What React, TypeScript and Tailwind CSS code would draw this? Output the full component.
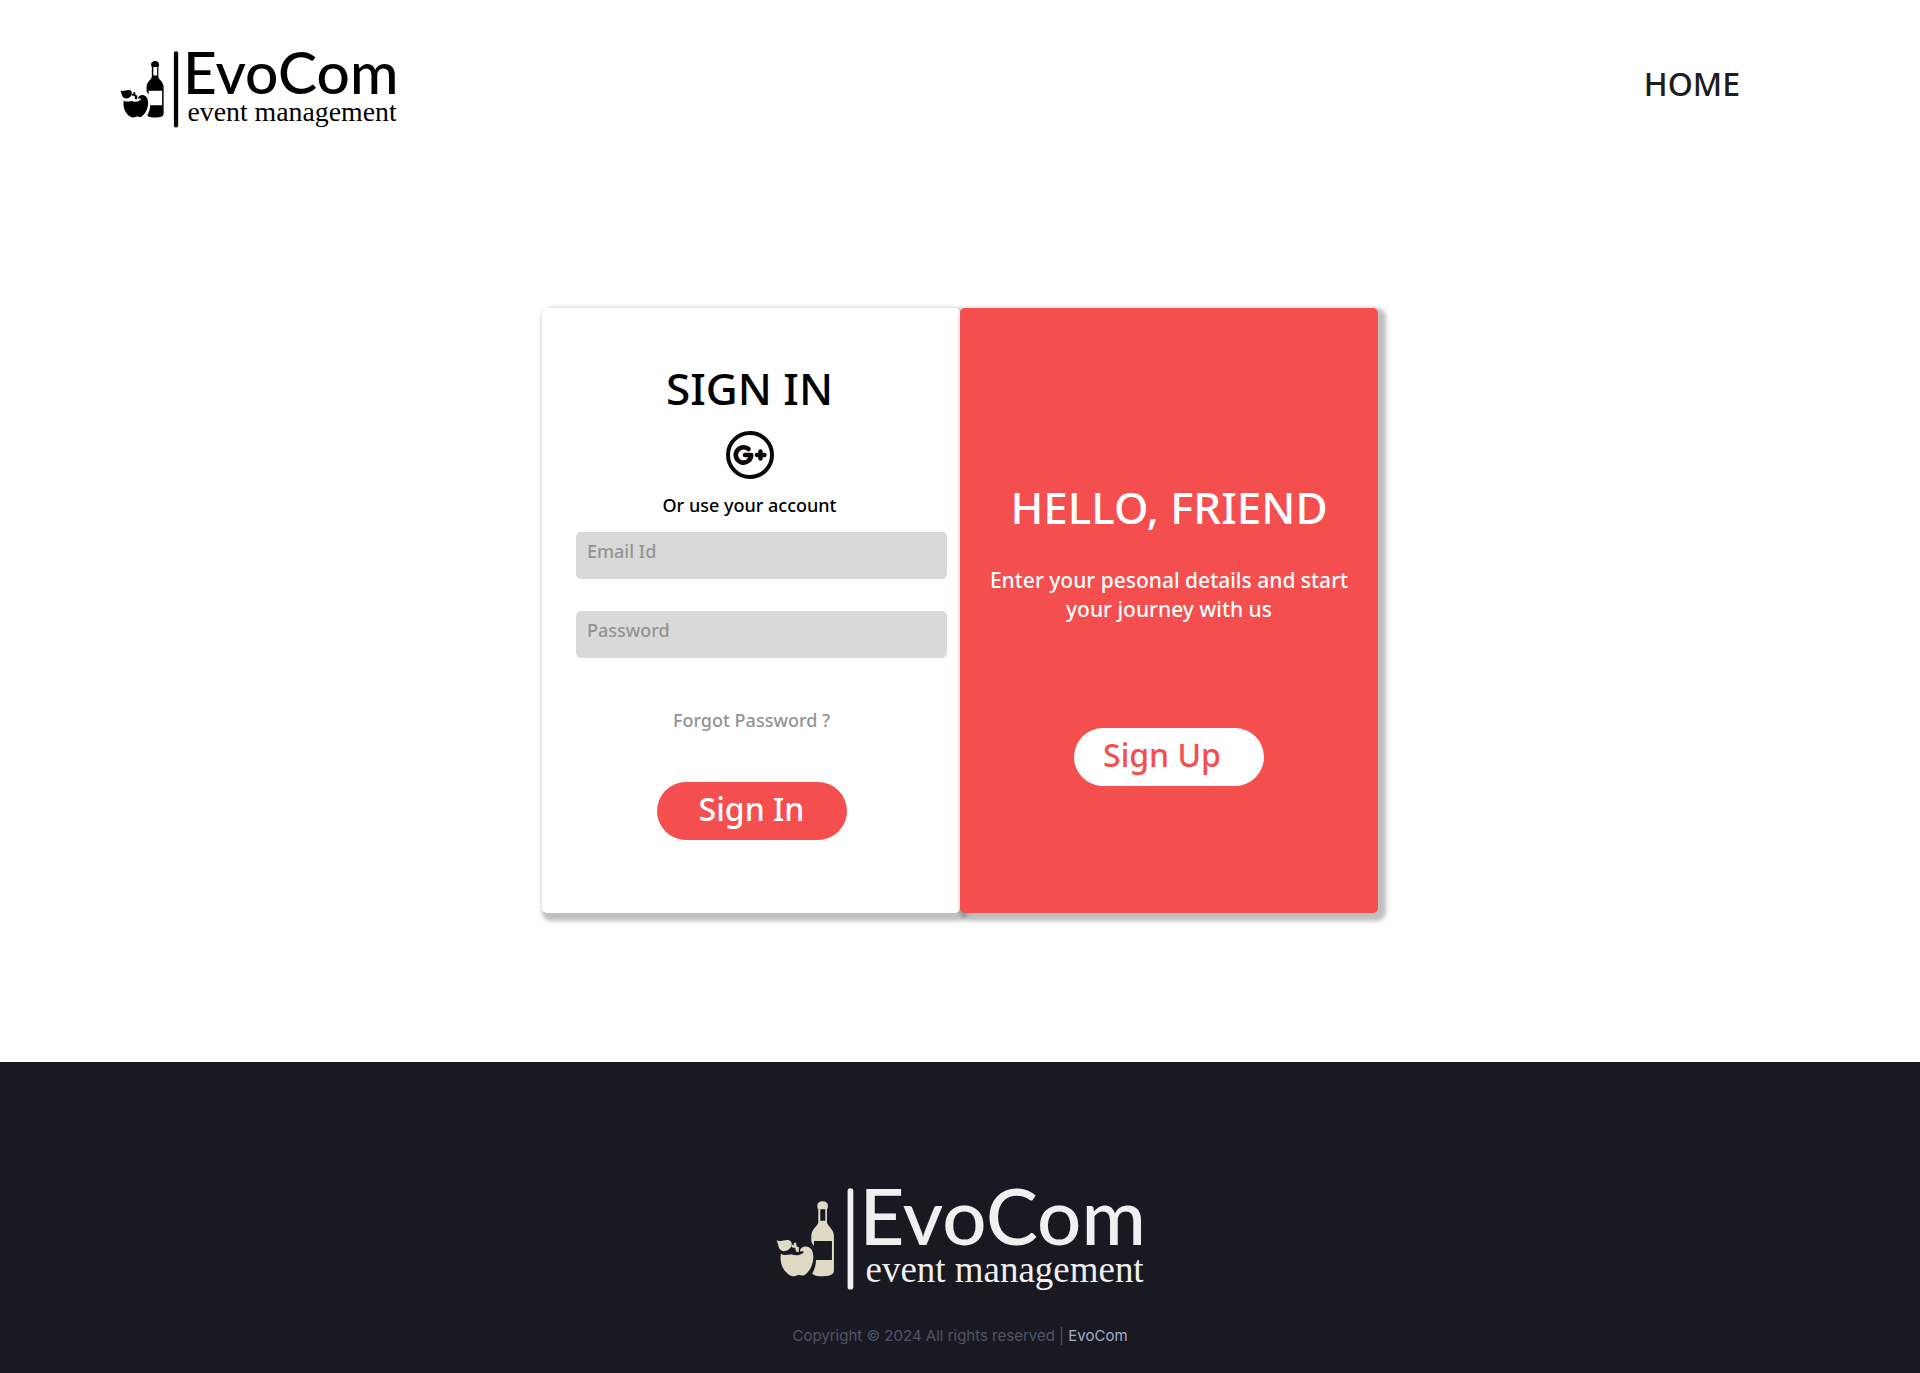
type LogoProps = { className: string; ink: string; fruit: string };

function Logo({ className, ink, fruit }: LogoProps) {
  return (
    <svg viewBox="0 0 1105 306" className={`overflow-visible ${className}`} role="img" aria-label="EvoCom event management">
      <g fill={fruit}>
        <path
          fillRule="evenodd"
          d="M124 53C124 45 130 40 140 40S156 45 156 53C156 59 155 62 153 64V102C153 114 174 122 174 144V248C174 262 160 265 141 265C126 265 112 264 109 256C116 244 120 230 120 216H168V159H114V174C110 168 106 164 106 160V144C106 122 127 114 127 102V64C125 62 124 59 124 53ZM133 64V98H148V64Z"
        />
        <path d="M1 158C16 162 22 155 36 156C46 157 50 166 46 176C40 188 24 194 14 186C5 179 9 169 1 158Z" />
        <path d="M48 170L54 173L53 165L60 164L62 176L69 178L68 193L60 191L58 180L47 178Z" />
        <path d="M15 197C20 203 34 202 46 199C56 204 68 203 76 198L82 195C85 190 80 188 72 191C72 181 80 176 90 176C104 176 113 190 112 210C111 232 100 252 86 261C78 266 72 260 64 262C56 266 48 266 40 261C24 251 9 226 15 197Z" />
      </g>
      <rect x="215" y="1" width="17" height="304" rx="8" fill={ink} />
      <text x="251" y="171" fontFamily="Lato, sans-serif" fontSize="234" fill={ink}>
        EvoCom
      </text>
      <text x="269" y="281" fontFamily="'Liberation Serif', serif" fontSize="111" fill={ink}>
        event management
      </text>
    </svg>
  );
}

function GooglePlusIcon() {
  return (
    <svg viewBox="0 0 48 48" className="size-12" fill="none" stroke="#0a0606" aria-hidden="true">
      <circle cx="24" cy="24" r="22" strokeWidth="4" />
      <path d="M22.5 18.1A7.7 7.7 0 1 0 25.2 24H19" strokeWidth="4.6" strokeLinecap="round" strokeLinejoin="round" />
      <path d="M34.5 20.5V27.500M31 24H38.500" strokeWidth="4.4" strokeLinecap="round" />
    </svg>
  );
}

const shadow = "shadow-[4px_4px_4px_4px_rgba(0,0,0,0.25)]";
const field =
  "block h-[47px] w-full rounded-[5px] bg-[#d9d9d9] px-[11px] pt-1 pb-3 text-lg leading-7 text-[#333] placeholder:text-[#939393] placeholder:opacity-100";
const pill = "h-[58px] w-[190px] rounded-full pb-1 text-[32px] leading-none";

export default function App() {
  return (
    <div className="flex min-h-screen flex-col bg-white font-['Noto_Sans',sans-serif] font-medium text-black">
      <header className="flex items-start justify-between pt-[51px] pr-[180px] pl-[120px]">
        <a href="#">
          <Logo className="w-[277px]" ink="#000000" fruit="#000000" />
        </a>
        <nav className="pt-2">
          <a href="#" className="text-[32px] leading-[50px] text-[#1d1d1d]">
            HOME
          </a>
        </nav>
      </header>

      <main className="mx-auto mt-[180px] mb-[149px] grid w-full max-w-[836px] grid-cols-2">
        <section className={`rounded-[5px] bg-white pt-12 pr-[13px] pb-[73px] pl-[34px] ${shadow}`}>
          <form className="flex flex-col items-center" onSubmit={(e) => e.preventDefault()}>
            <h1 className="mr-6 text-[44px] leading-[64px]">SIGN IN</h1>
            <button type="button" aria-label="Sign in with Google" className="mt-[11px] mr-6">
              <GooglePlusIcon />
            </button>
            <p className="mt-3 mr-6 text-lg leading-7">Or use your account</p>
            <input type="email" aria-label="Email Id" placeholder="Email Id" className={`mt-[13px] ${field}`} />
            <input type="password" aria-label="Password" placeholder="Password" className={`mt-8 ${field}`} />
            <a href="#" className="mt-12 mr-5 text-lg leading-7 text-[#939393]">
              Forgot Password ?
            </a>
            <button type="submit" className={`mt-12 mr-5 bg-[#f54e4e] text-white ${pill}`}>
              Sign In
            </button>
          </form>
        </section>

        <section
          className={`flex flex-col items-center rounded-[5px] bg-[#f54e4e] px-5 pt-[167px] text-center text-white ${shadow}`}
        >
          <h2 className="text-[44px] leading-[64px]">HELLO, FRIEND</h2>
          <p className="mt-[27px] text-[21px] leading-[29px]">Enter your pesonal details and start your journey with us</p>
          <button type="button" className={`mt-[104px] bg-white pr-[14px] text-[#f54e4e] ${pill}`}>
            Sign Up
          </button>
        </section>
      </main>

      <footer className="flex flex-1 flex-col items-center bg-[#191922] pt-[126px] pb-6">
        <Logo className="w-[368px]" ink="#f0f0f0" fruit="#dfdac5" />
        <p className="mt-[34px] font-[Inter,sans-serif] text-[15px] leading-6 font-normal text-[#4f5565]">
          Copyright © 2024 All rights reserved |{" "}
          <a href="#" className="text-[#a3acc2]">
            EvoCom
          </a>
        </p>
      </footer>
    </div>
  );
}
